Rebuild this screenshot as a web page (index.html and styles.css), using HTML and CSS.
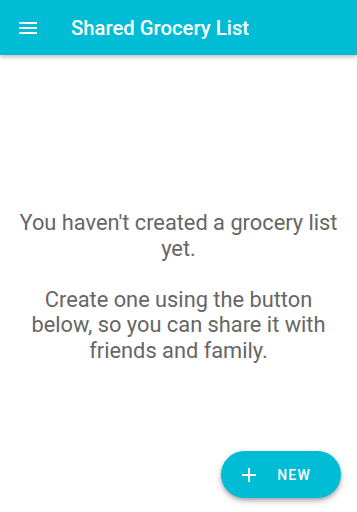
FILE: index.html
```html
<!DOCTYPE html>
<html lang="en">
<head>
    <meta charset="UTF-8">
    <meta name="viewport" content="width=device-width, initial-scale=1.0">
    <title>Shared Grocery List</title>
    <link rel="stylesheet" href="styles.css">
</head>
<body>

<div class="app">
    <header class="toolbar">
        <button class="menu-btn" aria-label="Menu">
            <svg width="24" height="24" viewBox="0 0 24 24">
                <path d="M3 18h18v-2H3v2zm0-5h18v-2H3v2zm0-7v2h18V6H3z" fill="#fff"/>
            </svg>
        </button>
        <h1 class="title">Shared Grocery List</h1>
    </header>

    <main class="empty">
        <p>You haven't created a grocery list yet.</p>
        <p>Create one using the button below, so you can share it with friends and family.</p>
    </main>

    <button class="fab">
        <svg width="24" height="24" viewBox="0 0 24 24">
            <path d="M19 13h-6v6h-2v-6H5v-2h6V5h2v6h6v2z" fill="#fff"/>
        </svg>
        <span>New</span>
    </button>
</div>

</body>
</html>
```

FILE: styles.css
```css
body {
    margin: 0;
    font-family: Roboto, "Noto Sans", sans-serif;
    background: #fff;
}
.app {
    position: relative;
    height: 512px;
    display: flex;
    flex-direction: column;
    overflow: hidden;
}
.toolbar {
    height: 55px;
    background: #00bcd4;
    display: flex;
    align-items: center;
    box-shadow: 0 2px 4px rgba(0, 0, 0, 0.25);
    position: relative;
    z-index: 1;
}
.menu-btn {
    background: none;
    border: none;
    padding: 0;
    margin-left: 16px;
    width: 24px;
    height: 24px;
    display: flex;
}
.title {
    margin: 0 0 0 31px;
    color: #fff;
    font-size: 20.3px;
    font-weight: 500;
}
.empty {
    flex: 1;
    display: flex;
    flex-direction: column;
    justify-content: center;
    padding: 6px 16px 0;
    text-align: center;
    color: #666;
    font-size: 21.8px;
    line-height: 25.5px;
}
.empty p {
    margin: 0;
}
.empty p + p {
    margin-top: 25.5px;
}
.fab {
    position: absolute;
    right: 16px;
    bottom: 14px;
    height: 47px;
    padding: 0 30px 0 16px;
    border: none;
    border-radius: 24px;
    background: #00bcd4;
    color: #fff;
    display: flex;
    align-items: center;
    gap: 16px;
    font-family: Roboto, sans-serif;
    font-size: 14px;
    font-weight: 500;
    letter-spacing: 1.2px;
    text-transform: uppercase;
    box-shadow: 0 3px 6px rgba(0, 0, 0, 0.25), 0 2px 3px rgba(0, 0, 0, 0.15);
}
```
